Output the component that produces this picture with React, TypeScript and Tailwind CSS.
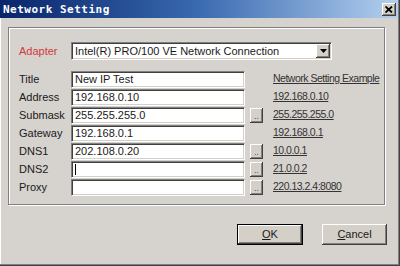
const rows = [
  { label: 'Title', value: 'New IP Test', btn: false, link: 'Network Setting Example' },
  { label: 'Address', value: '192.168.0.10', btn: false, link: '192.168.0.10' },
  { label: 'Submask', value: '255.255.255.0', btn: true, link: '255.255.255.0' },
  { label: 'Gateway', value: '192.168.0.1', btn: false, link: '192.168.0.1' },
  { label: 'DNS1', value: '202.108.0.20', btn: true, link: '10.0.0.1' },
  { label: 'DNS2', value: '', btn: true, link: '21.0.0.2', caret: true },
  { label: 'Proxy', value: '', btn: true, link: '220.13.2.4:8080' },
]

const sunken =
  'bg-white border-t border-l border-[#808080] shadow-[inset_1px_1px_0_#404040,inset_-1px_-1px_0_#d4d0c8] border-r border-b border-r-white border-b-white'
const raised =
  'bg-[#d4d0c8] shadow-[inset_-1px_-1px_0_#404040,inset_1px_1px_0_#ffffff,inset_-2px_-2px_0_#808080]'

export default function App() {
  return (
    <div
      className="w-[400px] h-[266px] bg-[#d6d2ce] overflow-hidden flex flex-col shadow-[inset_-1px_-1px_0_#404040,inset_-2px_-2px_0_#808080,inset_1px_0_0_#ffffff] text-[11px] text-[#1a1a1a]"
      style={{ fontFamily: '"Liberation Sans", Arial, sans-serif' }}
    >
      <div className="h-[18px] mr-[2px] flex items-center justify-between pl-[3px] pr-[2px] bg-gradient-to-r from-[#0a246a] via-[#3a6ab0] to-[#b4d0ee]">
        <span
          className="text-white font-bold text-[11px] tracking-[0.5px] leading-none"
          style={{ fontFamily: '"DejaVu Sans Mono", monospace' }}
        >
          Network Setting
        </span>
        <div className={`w-[14px] h-[13px] flex items-center justify-center ${raised}`}>
          <svg width="8" height="7" viewBox="0 0 8 7">
            <path d="M0.5 0.5 L7 6.5 M7 0.5 L0.5 6.5" stroke="#000" strokeWidth="1.8" />
          </svg>
        </div>
      </div>

      <div className="ml-[8px] mt-[9px] w-[377px] h-[178px] border border-[#808080] shadow-[inset_1px_1px_0_#ffffff,1px_1px_0_#ffffff] flex flex-col pl-[10px]">
        <div className="flex items-center mt-[14px] h-[18px]">
          <span className="w-[52px] shrink-0 text-[#d23a3a]">Adapter</span>
          <div className={`w-[261px] h-[18px] shrink-0 flex items-center ${sunken}`}>
            <span className="flex-1 pl-[3px] leading-none whitespace-nowrap">Intel(R) PRO/100 VE Network Connection</span>
            <div className={`w-[14px] h-[14px] mr-[1px] flex items-center justify-center ${raised}`}>
              <svg width="7" height="4" viewBox="0 0 7 4">
                <path d="M0 0 H7 L3.5 4 Z" fill="#000" />
              </svg>
            </div>
          </div>
        </div>

        <div className="flex flex-col mt-[10px]">
          {rows.map((r) => (
            <div key={r.label} className="flex items-center h-[18px]">
              <span className="w-[52px] shrink-0">{r.label}</span>
              <div className={`w-[174px] h-[17px] shrink-0 flex items-center pl-[3px] leading-none whitespace-nowrap ${sunken}`}>
                {r.caret ? <span className="w-px h-[11px] bg-black" /> : r.value}
              </div>
              <div className="w-[28px] shrink-0 flex items-center pl-[5px]">
                {r.btn && (
                  <div className={`w-[13px] h-[15px] flex items-end justify-center pb-[2px] text-[8px] leading-none ${raised}`}>
                    ..
                  </div>
                )}
              </div>
              <span className="underline text-[#333] whitespace-nowrap tracking-[-0.5px] text-[10.5px]">{r.link}</span>
            </div>
          ))}
        </div>
      </div>

      <div className="flex mt-[19px] ml-[237px] gap-[19px]">
        <button className={`w-[66px] h-[21px] border border-black flex items-center justify-center ${raised}`}>
          <span>
            <u>O</u>K
          </span>
        </button>
        <button className={`w-[65px] h-[21px] flex items-center justify-center ${raised}`}>
          <span>
            <u>C</u>ancel
          </span>
        </button>
      </div>
    </div>
  )
}
